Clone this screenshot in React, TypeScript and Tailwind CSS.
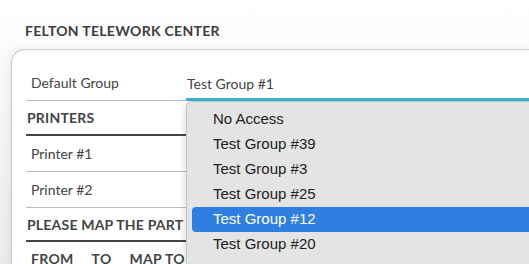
const items = [
  "No Access",
  "Test Group #39",
  "Test Group #3",
  "Test Group #25",
  "Test Group #12",
  "Test Group #20",
  "Test Group #4",
];

export default function App() {
  return (
    <div className="w-[529px] h-[264px] overflow-hidden bg-gradient-to-b from-[#ffffff] via-[#f5f5f5] to-[#ececec] font-['Lato',sans-serif] text-[#444]">
      {/* Heading */}
      <div className="h-[49px] pl-[25px] pt-[22px]">
        <h1 className="text-[14px] font-bold leading-[18px] tracking-[0.3px] text-[#3d3d3d]">
          FELTON TELEWORK CENTER
        </h1>
      </div>

      {/* Card */}
      <div className="relative ml-[11px] h-[260px] rounded-tl-[14px] border-l border-t border-[#c6c6c6] bg-white pl-[14px] pt-[15px] shadow-[-3px_0_8px_rgba(0,0,0,0.06)]">
        <div className="flex h-[36px] items-center">
          <div className="flex h-full w-[160px] items-center border-b border-[#bdbdbd] pl-[5px] text-[14px]">
            Default Group
          </div>
          <div className="flex h-full flex-1 items-center border-b-[3px] border-[#3bb0d6] pl-[1px] pt-[3px] text-[14px]">
            Test Group #1
          </div>
        </div>

        <div className="w-[200px]">
          <div className="flex h-[35px] items-center border-b-2 border-[#444] pl-[1px] text-[14px] font-bold tracking-[0.2px]">
            PRINTERS
          </div>
          <div className="flex h-[36px] items-center border-b border-[#bdbdbd] pl-[5px] text-[14px]">
            Printer #1
          </div>
          <div className="flex h-[36px] items-center border-b border-[#bdbdbd] pl-[5px] text-[14px]">
            Printer #2
          </div>
          <div className="flex h-[34px] items-center border-b-2 border-[#444] pl-[1px] text-[14px] font-bold tracking-[0.2px]">
            PLEASE MAP THE PART
          </div>
          <div className="flex h-[32px] items-center gap-[18px] pl-[5px] text-[14px] font-bold tracking-[0.3px]">
            <span>FROM</span>
            <span>TO</span>
            <span>MAP TO</span>
          </div>
        </div>

        {/* Open select menu */}
        <div className="absolute left-[174px] top-[51px] w-[400px] rounded-tl-[6px] border-l border-t border-[#c4c4c4] bg-[#e4e4e4] pt-[5px] font-['Liberation_Sans',sans-serif] shadow-[-2px_2px_6px_rgba(0,0,0,0.12)]">
          {items.map((item) => (
            <div
              key={item}
              className={
                item === "Test Group #12"
                  ? "mx-[5px] flex h-[25px] items-center rounded-[4px] bg-[#2f7fe3] pl-[21px] text-[15px] font-medium text-white"
                  : "mx-[5px] flex h-[25px] items-center pl-[21px] text-[15px] text-[#222]"
              }
            >
              {item}
            </div>
          ))}
        </div>
      </div>
    </div>
  );
}
